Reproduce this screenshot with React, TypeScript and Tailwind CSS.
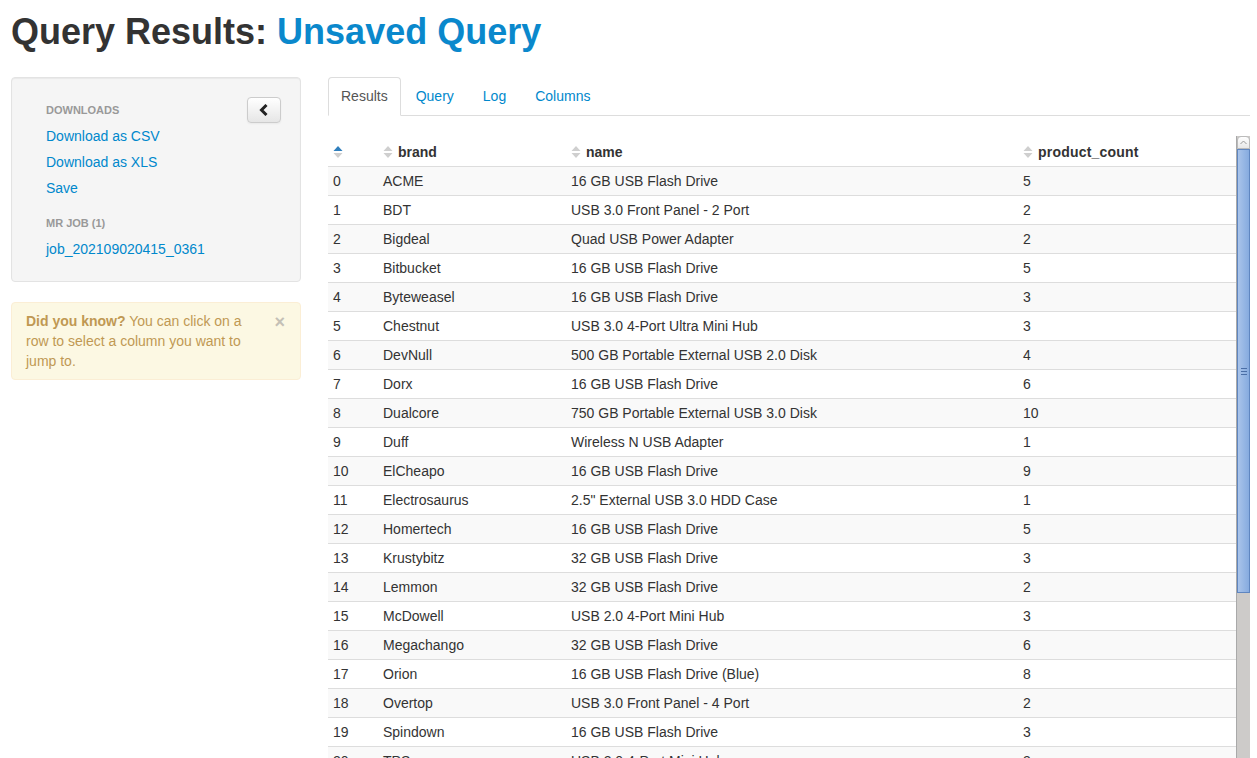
import React from 'react';

const rows: [string, string, string][] = [
  ['ACME', '16 GB USB Flash Drive', '5'],
  ['BDT', 'USB 3.0 Front Panel - 2 Port', '2'],
  ['Bigdeal', 'Quad USB Power Adapter', '2'],
  ['Bitbucket', '16 GB USB Flash Drive', '5'],
  ['Byteweasel', '16 GB USB Flash Drive', '3'],
  ['Chestnut', 'USB 3.0 4-Port Ultra Mini Hub', '3'],
  ['DevNull', '500 GB Portable External USB 2.0 Disk', '4'],
  ['Dorx', '16 GB USB Flash Drive', '6'],
  ['Dualcore', '750 GB Portable External USB 3.0 Disk', '10'],
  ['Duff', 'Wireless N USB Adapter', '1'],
  ['ElCheapo', '16 GB USB Flash Drive', '9'],
  ['Electrosaurus', '2.5" External USB 3.0 HDD Case', '1'],
  ['Homertech', '16 GB USB Flash Drive', '5'],
  ['Krustybitz', '32 GB USB Flash Drive', '3'],
  ['Lemmon', '32 GB USB Flash Drive', '2'],
  ['McDowell', 'USB 2.0 4-Port Mini Hub', '3'],
  ['Megachango', '32 GB USB Flash Drive', '6'],
  ['Orion', '16 GB USB Flash Drive (Blue)', '8'],
  ['Overtop', 'USB 3.0 Front Panel - 4 Port', '2'],
  ['Spindown', '16 GB USB Flash Drive', '3'],
  ['TPS', 'USB 2.0 4-Port Mini Hub', '3'],
];

function SortIcon({ active }: { active?: boolean }) {
  return (
    <svg width="10" height="14" viewBox="0 0 10 14" className="inline-block align-[-2px] mr-[5px]">
      <path d="M5 1 L9.5 6 L0.5 6 Z" fill={active ? '#2f7fbd' : '#cfcfcf'} />
      <path d="M5 13 L9.5 8 L0.5 8 Z" fill="#cfcfcf" />
    </svg>
  );
}

function ChevronLeft() {
  return (
    <svg width="10" height="12" viewBox="0 0 10 12">
      <path d="M7.5 1 L2.5 6 L7.5 11" stroke="#222" strokeWidth="3" fill="none" />
    </svg>
  );
}

export default function App() {
  return (
    <div className="h-[758px] overflow-hidden bg-white pl-[11px] pr-[7px] font-['Liberation_Sans',Arial,sans-serif] text-sm text-[#333]">
      <h1 className="mt-[12px] mb-[25px] text-[36px] font-bold leading-10 text-[#333]">
        Query Results: <span className="text-[#0a88cc]">Unsaved Query</span>
      </h1>

      <div className="flex gap-[27px]">
        {/* Sidebar */}
        <div className="w-[290px] shrink-0">
          <div className="relative rounded border border-[#e3e3e3] bg-[#f5f5f5] p-[19px] shadow-[inset_0_1px_1px_rgba(0,0,0,0.05)]">
            <button className="absolute right-[19px] top-[19px] flex h-[26px] w-[34px] items-center justify-center rounded border border-[#ccc] bg-gradient-to-b from-white to-[#e6e6e6] shadow-[0_1px_2px_rgba(0,0,0,0.05)]">
              <ChevronLeft />
            </button>
            <ul className="px-[15px]">
              <li className="py-[3px] text-[11px] font-bold uppercase leading-5 text-[#999]">Downloads</li>
              <li className="py-[3px] leading-5 text-[#0088cc]">Download as CSV</li>
              <li className="py-[3px] leading-5 text-[#0088cc]">Download as XLS</li>
              <li className="py-[3px] leading-5 text-[#0088cc]">Save</li>
              <li className="mt-[9px] py-[3px] text-[11px] font-bold uppercase leading-5 text-[#999]">MR Job (1)</li>
              <li className="py-[3px] leading-5 text-[#0088cc]">job_202109020415_0361</li>
            </ul>
          </div>

          <div className="relative mt-[20px] rounded border border-[#fbeed5] bg-[#fcf8e3] py-[8px] pl-[14px] pr-[35px] leading-5 text-[#c09853]">
            <span className="absolute right-[15px] top-[9px] text-[18px] font-bold leading-5 text-[#c4c0b6]">×</span>
            <strong>Did you know?</strong> You can click on a row to select a column you want to jump to.
          </div>
        </div>

        {/* Main */}
        <div className="min-w-0 flex-1">
          <ul className="flex border-b border-[#ddd]">
            <li className="-mb-px mr-[2px] rounded-t border border-[#ddd] border-b-transparent bg-white px-[12px] py-[8px] leading-5 text-[#555]">
              Results
            </li>
            <li className="mr-[3px] border border-transparent px-[12px] py-[8px] leading-5 text-[#0088cc]">Query</li>
            <li className="mr-[3px] border border-transparent px-[12px] py-[8px] leading-5 text-[#0088cc]">Log</li>
            <li className="mr-[2px] border border-transparent px-[12px] py-[8px] leading-5 text-[#0088cc]">Columns</li>
          </ul>

          <div className="mt-[20px] flex h-[640px]">
            <div className="min-w-0 flex-1 pt-[2px]">
              <table className="w-full border-collapse">
                <thead>
                  <tr>
                    <th className="w-[50px] px-[5px] py-[4px] text-left font-bold leading-5">
                      <SortIcon active />
                    </th>
                    <th className="w-[188px] px-[5px] py-[4px] text-left font-bold leading-5">
                      <SortIcon />brand
                    </th>
                    <th className="w-[452px] px-[5px] py-[4px] text-left font-bold leading-5">
                      <SortIcon />name
                    </th>
                    <th className="px-[5px] py-[4px] text-left font-bold leading-5 tracking-[0.2px]">
                      <SortIcon />product_count
                    </th>
                  </tr>
                </thead>
                <tbody>
                  {rows.map((r, i) => (
                    <tr key={i} className={i % 2 === 0 ? 'bg-[#f9f9f9]' : 'bg-white'}>
                      <td className="border-t border-[#ddd] px-[5px] py-[4px] leading-5">{i}</td>
                      <td className="border-t border-[#ddd] px-[5px] py-[4px] leading-5">{r[0]}</td>
                      <td className="border-t border-[#ddd] px-[5px] py-[4px] leading-5">{r[1]}</td>
                      <td className="border-t border-[#ddd] px-[5px] py-[4px] leading-5">{r[2]}</td>
                    </tr>
                  ))}
                </tbody>
              </table>
            </div>

            {/* scrollbar */}
            <div className="flex w-[14px] shrink-0 flex-col border-l border-[#a9a9a9] bg-[#cdcbc9]">
              <div className="flex h-[13px] items-center justify-center rounded-t-sm border border-[#bbb] bg-gradient-to-b from-white to-[#e8e8e8]">
                <svg width="7" height="5" viewBox="0 0 7 5">
                  <path d="M0.5 4 L3.5 1 L6.5 4" stroke="#999" strokeWidth="1" fill="none" />
                </svg>
              </div>
              <div className="flex h-[444px] flex-col items-center justify-center gap-[2px] border border-[#5f86c0] bg-gradient-to-r from-[#a9c4ea] to-[#86abdf]">
                <div className="h-px w-[6px] bg-[#4a6ea6]" />
                <div className="h-px w-[6px] bg-[#4a6ea6]" />
                <div className="h-px w-[6px] bg-[#4a6ea6]" />
              </div>
            </div>
          </div>
        </div>
      </div>
    </div>
  );
}
